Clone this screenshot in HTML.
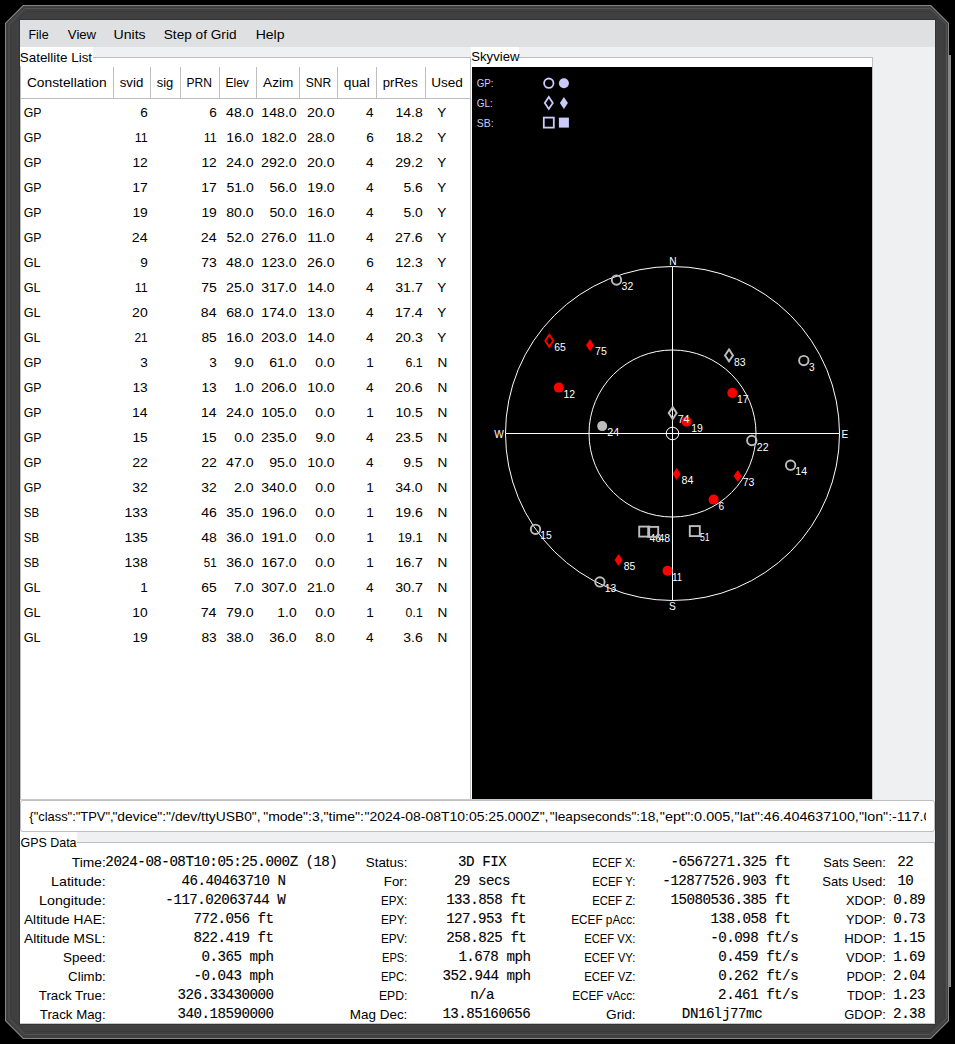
<!DOCTYPE html>
<html><head><meta charset="utf-8"><style>
html,body{margin:0;padding:0;background:#000;width:955px;height:1044px;overflow:hidden}
svg{display:block}
.ui{font-family:"Liberation Sans", sans-serif;font-size:13.6px}
.mono{font-family:"Liberation Mono", monospace;font-size:14.2px;stroke:#000;stroke-width:0.12px}
.sk{font-family:"Liberation Sans", sans-serif;font-size:10.2px}
</style></head><body>
<svg width="955" height="1044" viewBox="0 0 955 1044">
<rect x="949" y="55" width="2" height="932" fill="#888"/>
<rect x="946.5" y="55" width="2.5" height="932" fill="#3a3a3a"/>
<polygon points="23,5 931,5 949,23 949,1021 931,1039 23,1039 5,1021 5,23" fill="#868686"/>
<polygon points="23.6,6 930.4,6 948,23.6 948,1020.4 930.4,1038 23.6,1038 6,1020.4 6,23.6" fill="#404040"/>
<polygon points="25,8.5 930.5,8.5 946.5,24.5 946.5,1018.5 930.5,1034.5 25,1034.5 9,1018.5 9,24.5" fill="none" stroke="#535353" stroke-width="1"/>
<polygon points="26,11.5 929,11.5 944,26.5 944,1016.5 929,1031.5 26,1031.5 11,1016.5 11,26.5" fill="none" stroke="#3a3a3a" stroke-width="1"/>
<rect x="19.5" y="19.5" width="916" height="1005" fill="none" stroke="#333"/>
<rect x="20" y="20" width="915" height="1004" fill="#eff0f1"/>
<rect x="20" y="20" width="915" height="27" fill="#dfe0e2"/>
<text transform="matrix(0.9197 0 0 1 28.47 0)" x="0" y="38.8" class="ui" fill="#000" >File</text>
<text transform="matrix(0.9677 0 0 1 67.84 0)" x="0" y="38.8" class="ui" fill="#000" >View</text>
<text transform="matrix(1.0389 0 0 1 113.50 0)" x="0" y="38.8" class="ui" fill="#000" >Units</text>
<text transform="matrix(1.0027 0 0 1 163.77 0)" x="0" y="38.8" class="ui" fill="#000" >Step of Grid</text>
<text transform="matrix(1.0354 0 0 1 255.64 0)" x="0" y="38.8" class="ui" fill="#000" >Help</text>
<rect x="20" y="47" width="73" height="20" fill="#fff"/>
<rect x="20" y="57" width="451" height="743" fill="#fff"/>
<line x1="93" y1="57.5" x2="471" y2="57.5" stroke="#bcbec0"/>
<text transform="matrix(0.9873 0 0 1 19.78 0)" x="0" y="61.9" class="ui" fill="#000" >Satellite List</text>
<line x1="20.5" y1="66" x2="20.5" y2="800" stroke="#bcbec0"/>
<line x1="470.5" y1="57" x2="470.5" y2="800" stroke="#bcbec0"/>
<line x1="21" y1="98.5" x2="470" y2="98.5" stroke="#bcbec0"/>
<line x1="113.5" y1="67" x2="113.5" y2="98" stroke="#bcbec0"/>
<line x1="150.5" y1="67" x2="150.5" y2="98" stroke="#bcbec0"/>
<line x1="180.5" y1="67" x2="180.5" y2="98" stroke="#bcbec0"/>
<line x1="219.5" y1="67" x2="219.5" y2="98" stroke="#bcbec0"/>
<line x1="256.5" y1="67" x2="256.5" y2="98" stroke="#bcbec0"/>
<line x1="299.5" y1="67" x2="299.5" y2="98" stroke="#bcbec0"/>
<line x1="337.5" y1="67" x2="337.5" y2="98" stroke="#bcbec0"/>
<line x1="376.5" y1="67" x2="376.5" y2="98" stroke="#bcbec0"/>
<line x1="425.5" y1="67" x2="425.5" y2="98" stroke="#bcbec0"/>
<text transform="matrix(1.0153 0 0 1 26.90 0)" x="0" y="87.5" class="ui" fill="#000" >Constellation</text>
<text transform="matrix(0.9743 0 0 1 119.73 0)" x="0" y="87.5" class="ui" fill="#000" >svid</text>
<text transform="matrix(0.9519 0 0 1 156.74 0)" x="0" y="87.5" class="ui" fill="#000" >sig</text>
<text transform="matrix(0.8874 0 0 1 186.40 0)" x="0" y="87.5" class="ui" fill="#000" >PRN</text>
<text transform="matrix(0.8887 0 0 1 225.40 0)" x="0" y="87.5" class="ui" fill="#000" >Elev</text>
<text transform="matrix(1.0003 0 0 1 263.10 0)" x="0" y="87.5" class="ui" fill="#000" >Azim</text>
<text transform="matrix(0.8867 0 0 1 305.65 0)" x="0" y="87.5" class="ui" fill="#000" >SNR</text>
<text transform="matrix(1.0136 0 0 1 343.73 0)" x="0" y="87.5" class="ui" fill="#000" >qual</text>
<text transform="matrix(0.9634 0 0 1 382.76 0)" x="0" y="87.5" class="ui" fill="#000" >prRes</text>
<text transform="matrix(1.0007 0 0 1 431.14 0)" x="0" y="87.5" class="ui" fill="#000" >Used</text>
<text transform="matrix(0.9058 0 0 1 23.68 0)" x="0" y="116.6" class="ui" fill="#000" >GP</text>
<text transform="matrix(1.0000 0 0 1 140.20 0)" x="0" y="116.6" class="ui" fill="#000" >6</text>
<text transform="matrix(1.0000 0 0 1 209.20 0)" x="0" y="116.6" class="ui" fill="#000" >6</text>
<text transform="matrix(1.0413 0 0 1 226.12 0)" x="0" y="116.6" class="ui" fill="#000" >48.0</text>
<text transform="matrix(1.0379 0 0 1 261.35 0)" x="0" y="116.6" class="ui" fill="#000" >148.0</text>
<text transform="matrix(1.0419 0 0 1 307.11 0)" x="0" y="116.6" class="ui" fill="#000" >20.0</text>
<text transform="matrix(1.0000 0 0 1 366.01 0)" x="0" y="116.6" class="ui" fill="#000" >4</text>
<text transform="matrix(1.0325 0 0 1 395.42 0)" x="0" y="116.6" class="ui" fill="#000" >14.8</text>
<text transform="matrix(1.0000 0 0 1 437.29 0)" x="0" y="116.6" class="ui" fill="#000" >Y</text>
<text transform="matrix(0.9058 0 0 1 23.68 0)" x="0" y="141.6" class="ui" fill="#000" >GP</text>
<text transform="matrix(0.9247 0 0 1 134.71 0)" x="0" y="141.6" class="ui" fill="#000" >11</text>
<text transform="matrix(0.9247 0 0 1 203.71 0)" x="0" y="141.6" class="ui" fill="#000" >11</text>
<text transform="matrix(1.0324 0 0 1 226.36 0)" x="0" y="141.6" class="ui" fill="#000" >16.0</text>
<text transform="matrix(1.0379 0 0 1 261.35 0)" x="0" y="141.6" class="ui" fill="#000" >182.0</text>
<text transform="matrix(1.0419 0 0 1 307.11 0)" x="0" y="141.6" class="ui" fill="#000" >28.0</text>
<text transform="matrix(1.0000 0 0 1 366.20 0)" x="0" y="141.6" class="ui" fill="#000" >6</text>
<text transform="matrix(1.0351 0 0 1 395.41 0)" x="0" y="141.6" class="ui" fill="#000" >18.2</text>
<text transform="matrix(1.0000 0 0 1 437.29 0)" x="0" y="141.6" class="ui" fill="#000" >Y</text>
<text transform="matrix(0.9058 0 0 1 23.68 0)" x="0" y="166.6" class="ui" fill="#000" >GP</text>
<text transform="matrix(1.0174 0 0 1 132.43 0)" x="0" y="166.6" class="ui" fill="#000" >12</text>
<text transform="matrix(1.0174 0 0 1 201.43 0)" x="0" y="166.6" class="ui" fill="#000" >12</text>
<text transform="matrix(1.0419 0 0 1 226.11 0)" x="0" y="166.6" class="ui" fill="#000" >24.0</text>
<text transform="matrix(1.0451 0 0 1 261.11 0)" x="0" y="166.6" class="ui" fill="#000" >292.0</text>
<text transform="matrix(1.0419 0 0 1 307.11 0)" x="0" y="166.6" class="ui" fill="#000" >20.0</text>
<text transform="matrix(1.0000 0 0 1 366.01 0)" x="0" y="166.6" class="ui" fill="#000" >4</text>
<text transform="matrix(1.0446 0 0 1 395.17 0)" x="0" y="166.6" class="ui" fill="#000" >29.2</text>
<text transform="matrix(1.0000 0 0 1 437.29 0)" x="0" y="166.6" class="ui" fill="#000" >Y</text>
<text transform="matrix(0.9058 0 0 1 23.68 0)" x="0" y="191.6" class="ui" fill="#000" >GP</text>
<text transform="matrix(1.0220 0 0 1 132.37 0)" x="0" y="191.6" class="ui" fill="#000" >17</text>
<text transform="matrix(1.0220 0 0 1 201.37 0)" x="0" y="191.6" class="ui" fill="#000" >17</text>
<text transform="matrix(1.0294 0 0 1 226.43 0)" x="0" y="191.6" class="ui" fill="#000" >51.0</text>
<text transform="matrix(1.0294 0 0 1 269.43 0)" x="0" y="191.6" class="ui" fill="#000" >56.0</text>
<text transform="matrix(1.0324 0 0 1 307.36 0)" x="0" y="191.6" class="ui" fill="#000" >19.0</text>
<text transform="matrix(1.0000 0 0 1 366.01 0)" x="0" y="191.6" class="ui" fill="#000" >4</text>
<text transform="matrix(1.0218 0 0 1 403.44 0)" x="0" y="191.6" class="ui" fill="#000" >5.6</text>
<text transform="matrix(1.0000 0 0 1 437.29 0)" x="0" y="191.6" class="ui" fill="#000" >Y</text>
<text transform="matrix(0.9058 0 0 1 23.68 0)" x="0" y="216.6" class="ui" fill="#000" >GP</text>
<text transform="matrix(1.0174 0 0 1 132.43 0)" x="0" y="216.6" class="ui" fill="#000" >19</text>
<text transform="matrix(1.0174 0 0 1 201.43 0)" x="0" y="216.6" class="ui" fill="#000" >19</text>
<text transform="matrix(1.0368 0 0 1 226.24 0)" x="0" y="216.6" class="ui" fill="#000" >80.0</text>
<text transform="matrix(1.0294 0 0 1 269.43 0)" x="0" y="216.6" class="ui" fill="#000" >50.0</text>
<text transform="matrix(1.0324 0 0 1 307.36 0)" x="0" y="216.6" class="ui" fill="#000" >16.0</text>
<text transform="matrix(1.0000 0 0 1 366.01 0)" x="0" y="216.6" class="ui" fill="#000" >4</text>
<text transform="matrix(1.0182 0 0 1 403.44 0)" x="0" y="216.6" class="ui" fill="#000" >5.0</text>
<text transform="matrix(1.0000 0 0 1 437.29 0)" x="0" y="216.6" class="ui" fill="#000" >Y</text>
<text transform="matrix(0.9058 0 0 1 23.68 0)" x="0" y="241.6" class="ui" fill="#000" >GP</text>
<text transform="matrix(1.0478 0 0 1 131.73 0)" x="0" y="241.6" class="ui" fill="#000" >24</text>
<text transform="matrix(1.0478 0 0 1 200.73 0)" x="0" y="241.6" class="ui" fill="#000" >24</text>
<text transform="matrix(1.0294 0 0 1 226.43 0)" x="0" y="241.6" class="ui" fill="#000" >52.0</text>
<text transform="matrix(1.0451 0 0 1 261.11 0)" x="0" y="241.6" class="ui" fill="#000" >276.0</text>
<text transform="matrix(1.0759 0 0 1 307.31 0)" x="0" y="241.6" class="ui" fill="#000" >11.0</text>
<text transform="matrix(1.0000 0 0 1 366.01 0)" x="0" y="241.6" class="ui" fill="#000" >4</text>
<text transform="matrix(1.0445 0 0 1 395.11 0)" x="0" y="241.6" class="ui" fill="#000" >27.6</text>
<text transform="matrix(1.0000 0 0 1 437.29 0)" x="0" y="241.6" class="ui" fill="#000" >Y</text>
<text transform="matrix(0.9319 0 0 1 23.66 0)" x="0" y="266.6" class="ui" fill="#000" >GL</text>
<text transform="matrix(1.0000 0 0 1 140.26 0)" x="0" y="266.6" class="ui" fill="#000" >9</text>
<text transform="matrix(1.0304 0 0 1 201.18 0)" x="0" y="266.6" class="ui" fill="#000" >73</text>
<text transform="matrix(1.0413 0 0 1 226.12 0)" x="0" y="266.6" class="ui" fill="#000" >48.0</text>
<text transform="matrix(1.0379 0 0 1 261.35 0)" x="0" y="266.6" class="ui" fill="#000" >123.0</text>
<text transform="matrix(1.0419 0 0 1 307.11 0)" x="0" y="266.6" class="ui" fill="#000" >26.0</text>
<text transform="matrix(1.0000 0 0 1 366.20 0)" x="0" y="266.6" class="ui" fill="#000" >6</text>
<text transform="matrix(1.0300 0 0 1 395.48 0)" x="0" y="266.6" class="ui" fill="#000" >12.3</text>
<text transform="matrix(1.0000 0 0 1 437.29 0)" x="0" y="266.6" class="ui" fill="#000" >Y</text>
<text transform="matrix(0.9319 0 0 1 23.66 0)" x="0" y="291.6" class="ui" fill="#000" >GL</text>
<text transform="matrix(0.9247 0 0 1 134.71 0)" x="0" y="291.6" class="ui" fill="#000" >11</text>
<text transform="matrix(1.0304 0 0 1 201.18 0)" x="0" y="291.6" class="ui" fill="#000" >75</text>
<text transform="matrix(1.0419 0 0 1 226.11 0)" x="0" y="291.6" class="ui" fill="#000" >25.0</text>
<text transform="matrix(1.0411 0 0 1 261.24 0)" x="0" y="291.6" class="ui" fill="#000" >317.0</text>
<text transform="matrix(1.0324 0 0 1 307.36 0)" x="0" y="291.6" class="ui" fill="#000" >14.0</text>
<text transform="matrix(1.0000 0 0 1 366.01 0)" x="0" y="291.6" class="ui" fill="#000" >4</text>
<text transform="matrix(1.0418 0 0 1 395.24 0)" x="0" y="291.6" class="ui" fill="#000" >31.7</text>
<text transform="matrix(1.0000 0 0 1 437.29 0)" x="0" y="291.6" class="ui" fill="#000" >Y</text>
<text transform="matrix(0.9319 0 0 1 23.66 0)" x="0" y="316.6" class="ui" fill="#000" >GL</text>
<text transform="matrix(1.0303 0 0 1 132.12 0)" x="0" y="316.6" class="ui" fill="#000" >20</text>
<text transform="matrix(1.0386 0 0 1 200.87 0)" x="0" y="316.6" class="ui" fill="#000" >84</text>
<text transform="matrix(1.0394 0 0 1 226.17 0)" x="0" y="316.6" class="ui" fill="#000" >68.0</text>
<text transform="matrix(1.0379 0 0 1 261.35 0)" x="0" y="316.6" class="ui" fill="#000" >174.0</text>
<text transform="matrix(1.0324 0 0 1 307.36 0)" x="0" y="316.6" class="ui" fill="#000" >13.0</text>
<text transform="matrix(1.0000 0 0 1 366.01 0)" x="0" y="316.6" class="ui" fill="#000" >4</text>
<text transform="matrix(1.0422 0 0 1 394.97 0)" x="0" y="316.6" class="ui" fill="#000" >17.4</text>
<text transform="matrix(1.0000 0 0 1 437.29 0)" x="0" y="316.6" class="ui" fill="#000" >Y</text>
<text transform="matrix(0.9319 0 0 1 23.66 0)" x="0" y="341.6" class="ui" fill="#000" >GL</text>
<text transform="matrix(0.8769 0 0 1 134.47 0)" x="0" y="341.6" class="ui" fill="#000" >21</text>
<text transform="matrix(1.0168 0 0 1 201.38 0)" x="0" y="341.6" class="ui" fill="#000" >85</text>
<text transform="matrix(1.0324 0 0 1 226.36 0)" x="0" y="341.6" class="ui" fill="#000" >16.0</text>
<text transform="matrix(1.0451 0 0 1 261.11 0)" x="0" y="341.6" class="ui" fill="#000" >203.0</text>
<text transform="matrix(1.0324 0 0 1 307.36 0)" x="0" y="341.6" class="ui" fill="#000" >14.0</text>
<text transform="matrix(1.0000 0 0 1 366.01 0)" x="0" y="341.6" class="ui" fill="#000" >4</text>
<text transform="matrix(1.0395 0 0 1 395.24 0)" x="0" y="341.6" class="ui" fill="#000" >20.3</text>
<text transform="matrix(1.0000 0 0 1 437.29 0)" x="0" y="341.6" class="ui" fill="#000" >Y</text>
<text transform="matrix(0.9058 0 0 1 23.68 0)" x="0" y="366.6" class="ui" fill="#000" >GP</text>
<text transform="matrix(1.0000 0 0 1 140.20 0)" x="0" y="366.6" class="ui" fill="#000" >3</text>
<text transform="matrix(1.0000 0 0 1 209.20 0)" x="0" y="366.6" class="ui" fill="#000" >3</text>
<text transform="matrix(1.0323 0 0 1 234.18 0)" x="0" y="366.6" class="ui" fill="#000" >9.0</text>
<text transform="matrix(1.0394 0 0 1 269.17 0)" x="0" y="366.6" class="ui" fill="#000" >61.0</text>
<text transform="matrix(1.0251 0 0 1 315.31 0)" x="0" y="366.6" class="ui" fill="#000" >0.0</text>
<text transform="matrix(1.0000 0 0 1 366.26 0)" x="0" y="366.6" class="ui" fill="#000" >1</text>
<text transform="matrix(0.9120 0 0 1 405.51 0)" x="0" y="366.6" class="ui" fill="#000" >6.1</text>
<text transform="matrix(1.0000 0 0 1 437.38 0)" x="0" y="366.6" class="ui" fill="#000" >N</text>
<text transform="matrix(0.9058 0 0 1 23.68 0)" x="0" y="391.6" class="ui" fill="#000" >GP</text>
<text transform="matrix(1.0081 0 0 1 132.50 0)" x="0" y="391.6" class="ui" fill="#000" >13</text>
<text transform="matrix(1.0081 0 0 1 201.50 0)" x="0" y="391.6" class="ui" fill="#000" >13</text>
<text transform="matrix(1.0222 0 0 1 234.37 0)" x="0" y="391.6" class="ui" fill="#000" >1.0</text>
<text transform="matrix(1.0451 0 0 1 261.11 0)" x="0" y="391.6" class="ui" fill="#000" >206.0</text>
<text transform="matrix(1.0324 0 0 1 307.36 0)" x="0" y="391.6" class="ui" fill="#000" >10.0</text>
<text transform="matrix(1.0000 0 0 1 366.01 0)" x="0" y="391.6" class="ui" fill="#000" >4</text>
<text transform="matrix(1.0445 0 0 1 395.11 0)" x="0" y="391.6" class="ui" fill="#000" >20.6</text>
<text transform="matrix(1.0000 0 0 1 437.38 0)" x="0" y="391.6" class="ui" fill="#000" >N</text>
<text transform="matrix(0.9058 0 0 1 23.68 0)" x="0" y="416.6" class="ui" fill="#000" >GP</text>
<text transform="matrix(1.0307 0 0 1 131.98 0)" x="0" y="416.6" class="ui" fill="#000" >14</text>
<text transform="matrix(1.0307 0 0 1 200.98 0)" x="0" y="416.6" class="ui" fill="#000" >14</text>
<text transform="matrix(1.0419 0 0 1 226.11 0)" x="0" y="416.6" class="ui" fill="#000" >24.0</text>
<text transform="matrix(1.0379 0 0 1 261.35 0)" x="0" y="416.6" class="ui" fill="#000" >105.0</text>
<text transform="matrix(1.0251 0 0 1 315.31 0)" x="0" y="416.6" class="ui" fill="#000" >0.0</text>
<text transform="matrix(1.0000 0 0 1 366.26 0)" x="0" y="416.6" class="ui" fill="#000" >1</text>
<text transform="matrix(1.0300 0 0 1 395.48 0)" x="0" y="416.6" class="ui" fill="#000" >10.5</text>
<text transform="matrix(1.0000 0 0 1 437.38 0)" x="0" y="416.6" class="ui" fill="#000" >N</text>
<text transform="matrix(0.9058 0 0 1 23.68 0)" x="0" y="441.6" class="ui" fill="#000" >GP</text>
<text transform="matrix(1.0081 0 0 1 132.50 0)" x="0" y="441.6" class="ui" fill="#000" >15</text>
<text transform="matrix(1.0081 0 0 1 201.50 0)" x="0" y="441.6" class="ui" fill="#000" >15</text>
<text transform="matrix(1.0251 0 0 1 234.31 0)" x="0" y="441.6" class="ui" fill="#000" >0.0</text>
<text transform="matrix(1.0451 0 0 1 261.11 0)" x="0" y="441.6" class="ui" fill="#000" >235.0</text>
<text transform="matrix(1.0323 0 0 1 315.18 0)" x="0" y="441.6" class="ui" fill="#000" >9.0</text>
<text transform="matrix(1.0000 0 0 1 366.01 0)" x="0" y="441.6" class="ui" fill="#000" >4</text>
<text transform="matrix(1.0395 0 0 1 395.24 0)" x="0" y="441.6" class="ui" fill="#000" >23.5</text>
<text transform="matrix(1.0000 0 0 1 437.38 0)" x="0" y="441.6" class="ui" fill="#000" >N</text>
<text transform="matrix(0.9058 0 0 1 23.68 0)" x="0" y="466.6" class="ui" fill="#000" >GP</text>
<text transform="matrix(1.0351 0 0 1 132.18 0)" x="0" y="466.6" class="ui" fill="#000" >22</text>
<text transform="matrix(1.0351 0 0 1 201.18 0)" x="0" y="466.6" class="ui" fill="#000" >22</text>
<text transform="matrix(1.0413 0 0 1 226.12 0)" x="0" y="466.6" class="ui" fill="#000" >47.0</text>
<text transform="matrix(1.0393 0 0 1 269.18 0)" x="0" y="466.6" class="ui" fill="#000" >95.0</text>
<text transform="matrix(1.0324 0 0 1 307.36 0)" x="0" y="466.6" class="ui" fill="#000" >10.0</text>
<text transform="matrix(1.0000 0 0 1 366.01 0)" x="0" y="466.6" class="ui" fill="#000" >4</text>
<text transform="matrix(1.0289 0 0 1 403.31 0)" x="0" y="466.6" class="ui" fill="#000" >9.5</text>
<text transform="matrix(1.0000 0 0 1 437.38 0)" x="0" y="466.6" class="ui" fill="#000" >N</text>
<text transform="matrix(0.9058 0 0 1 23.68 0)" x="0" y="491.6" class="ui" fill="#000" >GP</text>
<text transform="matrix(1.0257 0 0 1 132.31 0)" x="0" y="491.6" class="ui" fill="#000" >32</text>
<text transform="matrix(1.0257 0 0 1 201.31 0)" x="0" y="491.6" class="ui" fill="#000" >32</text>
<text transform="matrix(1.0360 0 0 1 234.11 0)" x="0" y="491.6" class="ui" fill="#000" >2.0</text>
<text transform="matrix(1.0411 0 0 1 261.24 0)" x="0" y="491.6" class="ui" fill="#000" >340.0</text>
<text transform="matrix(1.0251 0 0 1 315.31 0)" x="0" y="491.6" class="ui" fill="#000" >0.0</text>
<text transform="matrix(1.0000 0 0 1 366.26 0)" x="0" y="491.6" class="ui" fill="#000" >1</text>
<text transform="matrix(1.0367 0 0 1 395.24 0)" x="0" y="491.6" class="ui" fill="#000" >34.0</text>
<text transform="matrix(1.0000 0 0 1 437.38 0)" x="0" y="491.6" class="ui" fill="#000" >N</text>
<text transform="matrix(0.8463 0 0 1 23.77 0)" x="0" y="516.6" class="ui" fill="#000" >SB</text>
<text transform="matrix(1.0252 0 0 1 124.49 0)" x="0" y="516.6" class="ui" fill="#000" >133</text>
<text transform="matrix(1.0340 0 0 1 201.13 0)" x="0" y="516.6" class="ui" fill="#000" >46</text>
<text transform="matrix(1.0367 0 0 1 226.24 0)" x="0" y="516.6" class="ui" fill="#000" >35.0</text>
<text transform="matrix(1.0379 0 0 1 261.35 0)" x="0" y="516.6" class="ui" fill="#000" >196.0</text>
<text transform="matrix(1.0251 0 0 1 315.31 0)" x="0" y="516.6" class="ui" fill="#000" >0.0</text>
<text transform="matrix(1.0000 0 0 1 366.26 0)" x="0" y="516.6" class="ui" fill="#000" >1</text>
<text transform="matrix(1.0350 0 0 1 395.35 0)" x="0" y="516.6" class="ui" fill="#000" >19.6</text>
<text transform="matrix(1.0000 0 0 1 437.38 0)" x="0" y="516.6" class="ui" fill="#000" >N</text>
<text transform="matrix(0.8463 0 0 1 23.77 0)" x="0" y="541.6" class="ui" fill="#000" >SB</text>
<text transform="matrix(1.0252 0 0 1 124.49 0)" x="0" y="541.6" class="ui" fill="#000" >135</text>
<text transform="matrix(1.0296 0 0 1 201.19 0)" x="0" y="541.6" class="ui" fill="#000" >48</text>
<text transform="matrix(1.0367 0 0 1 226.24 0)" x="0" y="541.6" class="ui" fill="#000" >36.0</text>
<text transform="matrix(1.0379 0 0 1 261.35 0)" x="0" y="541.6" class="ui" fill="#000" >191.0</text>
<text transform="matrix(1.0251 0 0 1 315.31 0)" x="0" y="541.6" class="ui" fill="#000" >0.0</text>
<text transform="matrix(1.0000 0 0 1 366.26 0)" x="0" y="541.6" class="ui" fill="#000" >1</text>
<text transform="matrix(0.9472 0 0 1 397.69 0)" x="0" y="541.6" class="ui" fill="#000" >19.1</text>
<text transform="matrix(1.0000 0 0 1 437.38 0)" x="0" y="541.6" class="ui" fill="#000" >N</text>
<text transform="matrix(0.8463 0 0 1 23.77 0)" x="0" y="566.6" class="ui" fill="#000" >SB</text>
<text transform="matrix(1.0282 0 0 1 124.42 0)" x="0" y="566.6" class="ui" fill="#000" >138</text>
<text transform="matrix(0.8556 0 0 1 203.78 0)" x="0" y="566.6" class="ui" fill="#000" >51</text>
<text transform="matrix(1.0367 0 0 1 226.24 0)" x="0" y="566.6" class="ui" fill="#000" >36.0</text>
<text transform="matrix(1.0379 0 0 1 261.35 0)" x="0" y="566.6" class="ui" fill="#000" >167.0</text>
<text transform="matrix(1.0251 0 0 1 315.31 0)" x="0" y="566.6" class="ui" fill="#000" >0.0</text>
<text transform="matrix(1.0000 0 0 1 366.26 0)" x="0" y="566.6" class="ui" fill="#000" >1</text>
<text transform="matrix(1.0376 0 0 1 395.35 0)" x="0" y="566.6" class="ui" fill="#000" >16.7</text>
<text transform="matrix(1.0000 0 0 1 437.38 0)" x="0" y="566.6" class="ui" fill="#000" >N</text>
<text transform="matrix(0.9319 0 0 1 23.66 0)" x="0" y="591.6" class="ui" fill="#000" >GL</text>
<text transform="matrix(1.0000 0 0 1 140.26 0)" x="0" y="591.6" class="ui" fill="#000" >1</text>
<text transform="matrix(1.0214 0 0 1 201.31 0)" x="0" y="591.6" class="ui" fill="#000" >65</text>
<text transform="matrix(1.0395 0 0 1 234.05 0)" x="0" y="591.6" class="ui" fill="#000" >7.0</text>
<text transform="matrix(1.0411 0 0 1 261.24 0)" x="0" y="591.6" class="ui" fill="#000" >307.0</text>
<text transform="matrix(1.0419 0 0 1 307.11 0)" x="0" y="591.6" class="ui" fill="#000" >21.0</text>
<text transform="matrix(1.0000 0 0 1 366.01 0)" x="0" y="591.6" class="ui" fill="#000" >4</text>
<text transform="matrix(1.0418 0 0 1 395.24 0)" x="0" y="591.6" class="ui" fill="#000" >30.7</text>
<text transform="matrix(1.0000 0 0 1 437.38 0)" x="0" y="591.6" class="ui" fill="#000" >N</text>
<text transform="matrix(0.9319 0 0 1 23.66 0)" x="0" y="616.6" class="ui" fill="#000" >GL</text>
<text transform="matrix(1.0127 0 0 1 132.37 0)" x="0" y="616.6" class="ui" fill="#000" >10</text>
<text transform="matrix(1.0522 0 0 1 200.66 0)" x="0" y="616.6" class="ui" fill="#000" >74</text>
<text transform="matrix(1.0444 0 0 1 226.04 0)" x="0" y="616.6" class="ui" fill="#000" >79.0</text>
<text transform="matrix(1.0222 0 0 1 277.37 0)" x="0" y="616.6" class="ui" fill="#000" >1.0</text>
<text transform="matrix(1.0251 0 0 1 315.31 0)" x="0" y="616.6" class="ui" fill="#000" >0.0</text>
<text transform="matrix(1.0000 0 0 1 366.26 0)" x="0" y="616.6" class="ui" fill="#000" >1</text>
<text transform="matrix(0.9059 0 0 1 405.62 0)" x="0" y="616.6" class="ui" fill="#000" >0.1</text>
<text transform="matrix(1.0000 0 0 1 437.38 0)" x="0" y="616.6" class="ui" fill="#000" >N</text>
<text transform="matrix(0.9319 0 0 1 23.66 0)" x="0" y="641.6" class="ui" fill="#000" >GL</text>
<text transform="matrix(1.0174 0 0 1 132.43 0)" x="0" y="641.6" class="ui" fill="#000" >19</text>
<text transform="matrix(1.0168 0 0 1 201.38 0)" x="0" y="641.6" class="ui" fill="#000" >83</text>
<text transform="matrix(1.0367 0 0 1 226.24 0)" x="0" y="641.6" class="ui" fill="#000" >38.0</text>
<text transform="matrix(1.0367 0 0 1 269.24 0)" x="0" y="641.6" class="ui" fill="#000" >36.0</text>
<text transform="matrix(1.0287 0 0 1 315.25 0)" x="0" y="641.6" class="ui" fill="#000" >8.0</text>
<text transform="matrix(1.0000 0 0 1 366.01 0)" x="0" y="641.6" class="ui" fill="#000" >4</text>
<text transform="matrix(1.0322 0 0 1 403.25 0)" x="0" y="641.6" class="ui" fill="#000" >3.6</text>
<text transform="matrix(1.0000 0 0 1 437.38 0)" x="0" y="641.6" class="ui" fill="#000" >N</text>
<rect x="471" y="47" width="48" height="20" fill="#fff"/>
<rect x="471" y="57" width="402" height="743" fill="#fff"/>
<line x1="519" y1="57.5" x2="872" y2="57.5" stroke="#bcbec0"/>
<line x1="872.5" y1="57" x2="872.5" y2="800" stroke="#bcbec0"/>
<text transform="matrix(0.9645 0 0 1 471.30 0)" x="0" y="61.4" class="ui" fill="#000" >Skyview</text>
<rect x="472" y="67" width="400" height="732" fill="#000"/>
<text transform="matrix(0.9594 0 0 1 476.72 0)" x="0" y="87.2" class="sk" fill="#cacafc" >GP:</text>
<circle cx="548.8" cy="83.2" r="4.7" fill="none" stroke="#cacafc" stroke-width="1.8"/>
<circle cx="563.9" cy="83.2" r="5" fill="#cacafc"/>
<text transform="matrix(0.9782 0 0 1 476.71 0)" x="0" y="106.9" class="sk" fill="#cacafc" >GL:</text>
<polygon points="548.8,96.9 552.8,102.9 548.8,108.9 544.8,102.9" fill="none" stroke="#cacafc" stroke-width="1.8"/>
<polygon points="563.9,96.9 567.9,102.9 563.9,108.9 559.9,102.9" fill="#cacafc"/>
<text transform="matrix(1.0272 0 0 1 476.75 0)" x="0" y="126.6" class="sk" fill="#cacafc" >SB:</text>
<rect x="543.8" y="117.6" width="10" height="10" fill="none" stroke="#cacafc" stroke-width="1.8"/>
<rect x="558.9" y="117.6" width="10" height="10" fill="#cacafc"/>
<circle cx="672.5" cy="433.5" r="167" fill="none" stroke="#fff" stroke-width="1"/>
<circle cx="672.5" cy="433.5" r="83.5" fill="none" stroke="#fff" stroke-width="1"/>
<circle cx="672.5" cy="433.5" r="6.3" fill="none" stroke="#fff" stroke-width="1"/>
<line x1="505.5" y1="433.5" x2="839.5" y2="433.5" stroke="#fff" stroke-width="1"/>
<line x1="672.5" y1="266.5" x2="672.5" y2="600.5" stroke="#fff" stroke-width="1"/>
<text transform="matrix(1.0000 0 0 1 669.31 0)" x="0" y="265" class="sk" fill="#fff" >N</text>
<text transform="matrix(1.0000 0 0 1 669.12 0)" x="0" y="609.5" class="sk" fill="#fff" >S</text>
<text transform="matrix(1.0000 0 0 1 494.19 0)" x="0" y="437.5" class="sk" fill="#fff" >W</text>
<text transform="matrix(1.0000 0 0 1 841.41 0)" x="0" y="437.5" class="sk" fill="#fff" >E</text>
<circle cx="713.6" cy="499.6" r="5" fill="#ff0000"/>
<text transform="matrix(1.0000 0 0 1 718.60 0)" x="0" y="510" class="sk" fill="#fff" >6</text>
<circle cx="667.5" cy="570.7" r="5" fill="#ff0000"/>
<text transform="matrix(0.9294 0 0 1 672.31 0)" x="0" y="581" class="sk" fill="#fff" >11</text>
<circle cx="558.8" cy="387.6" r="5" fill="#ff0000"/>
<text transform="matrix(1.0207 0 0 1 563.49 0)" x="0" y="398" class="sk" fill="#fff" >12</text>
<circle cx="732.3" cy="393.0" r="5" fill="#ff0000"/>
<text transform="matrix(1.0269 0 0 1 737.02 0)" x="0" y="403" class="sk" fill="#fff" >17</text>
<circle cx="686.5" cy="421.6" r="5" fill="#ff0000"/>
<text transform="matrix(1.0207 0 0 1 691.25 0)" x="0" y="432" class="sk" fill="#fff" >19</text>
<circle cx="602.2" cy="426.1" r="5" fill="#bdbdbd"/>
<text transform="matrix(1.0554 0 0 1 607.15 0)" x="0" y="436" class="sk" fill="#fff" >24</text>
<polygon points="737.7,469.9 741.7,475.9 737.7,481.9 733.7,475.9" fill="#ff0000"/>
<text transform="matrix(1.0321 0 0 1 742.64 0)" x="0" y="486" class="sk" fill="#fff" >73</text>
<polygon points="590.0,339.3 594.0,345.3 590.0,351.3 586.0,345.3" fill="#ff0000"/>
<text transform="matrix(1.0321 0 0 1 595.03 0)" x="0" y="355" class="sk" fill="#fff" >75</text>
<polygon points="676.6,468.1 680.6,474.1 676.6,480.1 672.6,474.1" fill="#ff0000"/>
<text transform="matrix(1.0433 0 0 1 681.61 0)" x="0" y="484" class="sk" fill="#fff" >84</text>
<polygon points="618.6,553.9 622.6,559.9 618.6,565.9 614.6,559.9" fill="#ff0000"/>
<text transform="matrix(1.0199 0 0 1 623.70 0)" x="0" y="570" class="sk" fill="#fff" >85</text>
<circle cx="803.8" cy="360.6" r="4.7" fill="none" stroke="#bdbdbd" stroke-width="1.9"/>
<text transform="matrix(1.0000 0 0 1 808.88 0)" x="0" y="371" class="sk" fill="#fff" >3</text>
<circle cx="599.9" cy="581.9" r="4.7" fill="none" stroke="#bdbdbd" stroke-width="1.9"/>
<text transform="matrix(1.0144 0 0 1 604.64 0)" x="0" y="592" class="sk" fill="#fff" >13</text>
<circle cx="790.6" cy="465.2" r="4.7" fill="none" stroke="#bdbdbd" stroke-width="1.9"/>
<text transform="matrix(1.0385 0 0 1 795.31 0)" x="0" y="475" class="sk" fill="#fff" >14</text>
<circle cx="535.5" cy="529.3" r="4.7" fill="none" stroke="#bdbdbd" stroke-width="1.9"/>
<text transform="matrix(1.0144 0 0 1 540.24 0)" x="0" y="539" class="sk" fill="#fff" >15</text>
<circle cx="751.8" cy="440.5" r="4.7" fill="none" stroke="#bdbdbd" stroke-width="1.9"/>
<text transform="matrix(1.0383 0 0 1 756.77 0)" x="0" y="451" class="sk" fill="#fff" >22</text>
<circle cx="616.5" cy="280.1" r="4.7" fill="none" stroke="#bdbdbd" stroke-width="1.9"/>
<text transform="matrix(1.0259 0 0 1 621.57 0)" x="0" y="290" class="sk" fill="#fff" >32</text>
<rect x="639.2" y="526.6" width="10" height="10" fill="none" stroke="#bdbdbd" stroke-width="1.9"/>
<text transform="matrix(1.0311 0 0 1 649.48 0)" x="0" y="542" class="sk" fill="#fff" >46</text>
<rect x="648.2" y="526.9" width="10" height="10" fill="none" stroke="#bdbdbd" stroke-width="1.9"/>
<text transform="matrix(1.0311 0 0 1 658.49 0)" x="0" y="542" class="sk" fill="#fff" >48</text>
<rect x="689.8" y="526.1" width="10" height="10" fill="none" stroke="#bdbdbd" stroke-width="1.9"/>
<text transform="matrix(0.8529 0 0 1 700.02 0)" x="0" y="541" class="sk" fill="#fff" >51</text>
<polygon points="549.3,334.8 553.3,340.8 549.3,346.8 545.3,340.8" fill="none" stroke="#ff0000" stroke-width="1.9"/>
<text transform="matrix(1.0201 0 0 1 554.29 0)" x="0" y="351" class="sk" fill="#fff" >65</text>
<polygon points="672.7,407.1 676.7,413.1 672.7,419.1 668.7,413.1" fill="none" stroke="#bdbdbd" stroke-width="1.9"/>
<text transform="matrix(1.0554 0 0 1 677.63 0)" x="0" y="423" class="sk" fill="#fff" >74</text>
<polygon points="729.0,349.4 733.0,355.4 729.0,361.4 725.0,355.4" fill="none" stroke="#bdbdbd" stroke-width="1.9"/>
<text transform="matrix(1.0199 0 0 1 734.07 0)" x="0" y="366" class="sk" fill="#fff" >83</text>
<rect x="20.5" y="800.5" width="914" height="31" rx="2.5" fill="#fff" stroke="#bcbec0"/>
<line x1="20" y1="799.5" x2="873" y2="799.5" stroke="#c8c9cb"/>
<clipPath id="ec"><rect x="21" y="801" width="905" height="30"/></clipPath>
<g clip-path="url(#ec)">
<text transform="matrix(0.9496 0 0 1 29.32 0)" x="0" y="820.6" class="ui" fill="#000" >{&quot;class&quot;:&quot;TPV&quot;,</text>
<text transform="matrix(1.0185 0 0 1 112.43 0)" x="0" y="820.6" class="ui" fill="#000" >&quot;device&quot;:&quot;/dev/ttyUSB0&quot;,</text>
<text transform="matrix(1.0275 0 0 1 263.22 0)" x="0" y="820.6" class="ui" fill="#000" >&quot;mode&quot;:3,</text>
<text transform="matrix(1.0357 0 0 1 323.52 0)" x="0" y="820.6" class="ui" fill="#000" >&quot;time&quot;:</text>
<text transform="matrix(1.0289 0 0 1 364.52 0)" x="0" y="820.6" class="ui" fill="#000" >&quot;2024-08-08T10:05:25.000Z&quot;,</text>
<text transform="matrix(1.0053 0 0 1 549.83 0)" x="0" y="820.6" class="ui" fill="#000" >&quot;leapseconds&quot;:18,</text>
<text transform="matrix(1.0613 0 0 1 659.80 0)" x="0" y="820.6" class="ui" fill="#000" >&quot;ept&quot;:0.005,</text>
<text transform="matrix(1.0488 0 0 1 734.61 0)" x="0" y="820.6" class="ui" fill="#000" >&quot;lat&quot;:46.404637100,</text>
<text transform="matrix(1.0486 0 0 1 859.01 0)" x="0" y="820.6" class="ui" fill="#000" >&quot;lon&quot;:-117.020637440,&quot;alt</text>
</g>
<rect x="20" y="832" width="57" height="20" fill="#fff"/>
<rect x="20" y="842" width="915" height="182" fill="#fff"/>
<polyline points="20,1023.5 934.5,1023.5 934.5,842" fill="none" stroke="#c6c7c8"/>
<line x1="77" y1="842.5" x2="935" y2="842.5" stroke="#bcbec0"/>
<text transform="matrix(0.9163 0 0 1 20.47 0)" x="0" y="847" class="ui" fill="#000" >GPS Data</text>
<text transform="matrix(1.0150 0 0 1 71.78 0)" x="0" y="867" class="ui" fill="#000" >Time:</text>
<text x="105.29 113.38 121.29 129.35 137.35 145.38 153.35 161.35 169.38 177.35 185.38 193.51 201.38 209.35 217.38 225.29 233.35 241.29 249.29 257.35 265.38 273.38 281.38 289.66 305.57 313.51 321.35 329.13" y="866" class="mono" fill="#000">2024-08-08T10:05:25.000Z(18)</text>
<text transform="matrix(0.9846 0 0 1 365.75 0)" x="0" y="867" class="ui" fill="#000" >Status:</text>
<text x="458.09 465.96 482.34 490.15 498.15" y="866" class="mono" fill="#000">3DFIX</text>
<text transform="matrix(0.8169 0 0 1 592.21 0)" x="0" y="867" class="ui" fill="#000" >ECEF X:</text>
<text x="670.45 678.42 686.39 694.42 702.39 710.39 718.39 726.61 734.45 742.39 750.39 758.39 774.51 782.29" y="866" class="mono" fill="#000">-6567271.325ft</text>
<text transform="matrix(0.9403 0 0 1 823.27 0)" x="0" y="867" class="ui" fill="#000" >Sats Seen:</text>
<text x="897.19 905.19" y="866" class="mono" fill="#000">22</text>
<text transform="matrix(1.0492 0 0 1 51.04 0)" x="0" y="886" class="ui" fill="#000" >Latitude:</text>
<text x="181.45 189.42 197.45 205.45 213.48 221.45 229.42 237.39 245.39 253.61 261.48 277.45" y="885" class="mono" fill="#000">46.40463710N</text>
<text transform="matrix(0.9772 0 0 1 383.83 0)" x="0" y="886" class="ui" fill="#000" >For:</text>
<text x="453.89 461.92 477.98 485.98 494.11 501.98" y="885" class="mono" fill="#000">29secs</text>
<text transform="matrix(0.8333 0 0 1 592.19 0)" x="0" y="886" class="ui" fill="#000" >ECEF Y:</text>
<text x="662.35 670.51 678.29 686.35 694.29 702.29 710.29 718.29 726.32 734.35 742.32 750.38 758.29 774.41 782.19" y="885" class="mono" fill="#000">-12877526.903ft</text>
<text transform="matrix(0.9559 0 0 1 822.27 0)" x="0" y="886" class="ui" fill="#000" >Sats Used:</text>
<text x="897.41 905.28" y="885" class="mono" fill="#000">10</text>
<text transform="matrix(1.0503 0 0 1 39.04 0)" x="0" y="905" class="ui" fill="#000" >Longitude:</text>
<text x="165.25 173.41 181.41 189.19 197.25 205.28 213.19 221.28 229.22 237.19 245.19 253.25 261.25 277.25" y="904" class="mono" fill="#000">-117.02063744W</text>
<text transform="matrix(0.8493 0 0 1 380.97 0)" x="0" y="905" class="ui" fill="#000" >EPX:</text>
<text x="446.31 454.09 462.09 470.15 478.15 486.09 494.15 510.21 517.99" y="904" class="mono" fill="#000">133.858ft</text>
<text transform="matrix(0.8294 0 0 1 592.19 0)" x="0" y="905" class="ui" fill="#000" >ECEF Z:</text>
<text x="670.61 678.39 686.48 694.45 702.48 710.39 718.39 726.42 734.45 742.39 750.45 758.39 774.51 782.29" y="904" class="mono" fill="#000">15080536.385ft</text>
<text transform="matrix(0.9437 0 0 1 845.94 0)" x="0" y="905" class="ui" fill="#000" >XDOP:</text>
<text x="893.18 901.15 909.15 917.12" y="904" class="mono" fill="#000">0.89</text>
<text transform="matrix(1.0102 0 0 1 23.97 0)" x="0" y="924" class="ui" fill="#000" >Altitude HAE:</text>
<text x="193.49 201.49 209.49 217.55 225.58 233.49 241.52 257.61 265.39" y="923" class="mono" fill="#000">772.056ft</text>
<text transform="matrix(0.8721 0 0 1 380.94 0)" x="0" y="924" class="ui" fill="#000" >EPY:</text>
<text x="446.31 454.09 462.09 470.15 478.12 486.09 494.09 510.21 517.99" y="923" class="mono" fill="#000">127.953ft</text>
<text transform="matrix(0.8681 0 0 1 571.15 0)" x="0" y="924" class="ui" fill="#000" >ECEF pAcc:</text>
<text x="710.61 718.39 726.45 734.45 742.48 750.39 758.45 774.51 782.29" y="923" class="mono" fill="#000">138.058ft</text>
<text transform="matrix(0.9452 0 0 1 845.88 0)" x="0" y="924" class="ui" fill="#000" >YDOP:</text>
<text x="893.18 901.15 909.09 917.09" y="923" class="mono" fill="#000">0.73</text>
<text transform="matrix(1.0103 0 0 1 23.97 0)" x="0" y="943" class="ui" fill="#000" >Altitude MSL:</text>
<text x="193.55 201.49 209.49 217.55 225.55 233.71 241.52 257.61 265.39" y="942" class="mono" fill="#000">822.419ft</text>
<text transform="matrix(0.8645 0 0 1 380.95 0)" x="0" y="943" class="ui" fill="#000" >EPV:</text>
<text x="446.29 454.29 462.35 470.35 478.35 486.29 494.29 510.41 518.19" y="942" class="mono" fill="#000">258.825ft</text>
<text transform="matrix(0.8265 0 0 1 584.20 0)" x="0" y="943" class="ui" fill="#000" >ECEF VX:</text>
<text x="710.15 718.18 726.15 734.18 742.12 750.15 766.21 773.99 781.99 790.18" y="942" class="mono" fill="#000">-0.098ft/s</text>
<text transform="matrix(0.9650 0 0 1 844.34 0)" x="0" y="943" class="ui" fill="#000" >HDOP:</text>
<text x="893.31 901.15 909.31 917.09" y="942" class="mono" fill="#000">1.15</text>
<text transform="matrix(0.9904 0 0 1 63.04 0)" x="0" y="962" class="ui" fill="#000" >Speed:</text>
<text x="201.58 209.55 217.49 225.52 233.49 249.58 257.61 265.58" y="961" class="mono" fill="#000">0.365mph</text>
<text transform="matrix(0.8144 0 0 1 382.01 0)" x="0" y="962" class="ui" fill="#000" >EPS:</text>
<text x="458.51 466.35 474.32 482.29 490.35 506.38 514.41 522.38" y="961" class="mono" fill="#000">1.678mph</text>
<text transform="matrix(0.8371 0 0 1 584.18 0)" x="0" y="962" class="ui" fill="#000" >ECEF VY:</text>
<text x="718.18 726.15 734.15 742.09 750.12 766.21 773.99 781.99 790.18" y="961" class="mono" fill="#000">0.459ft/s</text>
<text transform="matrix(0.9395 0 0 1 846.12 0)" x="0" y="962" class="ui" fill="#000" >VDOP:</text>
<text x="893.31 901.15 909.12 917.12" y="961" class="mono" fill="#000">1.69</text>
<text transform="matrix(0.9759 0 0 1 68.12 0)" x="0" y="981" class="ui" fill="#000" >Climb:</text>
<text x="193.45 201.48 209.45 217.48 225.45 233.39 249.48 257.51 265.48" y="980" class="mono" fill="#000">-0.043mph</text>
<text transform="matrix(0.8276 0 0 1 380.99 0)" x="0" y="981" class="ui" fill="#000" >EPC:</text>
<text x="442.39 450.39 458.39 466.45 474.42 482.45 490.45 506.48 514.51 522.48" y="980" class="mono" fill="#000">352.944mph</text>
<text transform="matrix(0.8373 0 0 1 584.18 0)" x="0" y="981" class="ui" fill="#000" >ECEF VZ:</text>
<text x="718.18 726.15 734.09 742.12 750.09 766.21 773.99 781.99 790.18" y="980" class="mono" fill="#000">0.262ft/s</text>
<text transform="matrix(0.9332 0 0 1 846.38 0)" x="0" y="981" class="ui" fill="#000" >PDOP:</text>
<text x="893.09 901.15 909.18 917.15" y="980" class="mono" fill="#000">2.04</text>
<text transform="matrix(0.9798 0 0 1 38.79 0)" x="0" y="1000" class="ui" fill="#000" >Track True:</text>
<text x="177.39 185.39 193.42 201.45 209.39 217.39 225.45 233.39 241.48 249.48 257.48 265.48" y="999" class="mono" fill="#000">326.33430000</text>
<text transform="matrix(0.8955 0 0 1 378.92 0)" x="0" y="1000" class="ui" fill="#000" >EPD:</text>
<text x="470.28 478.09 485.91" y="999" class="mono" fill="#000">n/a</text>
<text transform="matrix(0.8634 0 0 1 572.15 0)" x="0" y="1000" class="ui" fill="#000" >ECEF vAcc:</text>
<text x="718.09 726.15 734.15 742.12 750.31 766.21 773.99 781.99 790.18" y="999" class="mono" fill="#000">2.461ft/s</text>
<text transform="matrix(0.9352 0 0 1 847.01 0)" x="0" y="1000" class="ui" fill="#000" >TDOP:</text>
<text x="893.31 901.15 909.09 917.09" y="999" class="mono" fill="#000">1.23</text>
<text transform="matrix(0.9759 0 0 1 39.80 0)" x="0" y="1019" class="ui" fill="#000" >Track Mag:</text>
<text x="177.39 185.45 193.48 201.45 209.61 217.45 225.39 233.42 241.48 249.48 257.48 265.48" y="1018" class="mono" fill="#000">340.18590000</text>
<text transform="matrix(0.9896 0 0 1 349.81 0)" x="0" y="1019" class="ui" fill="#000" >Mag Dec:</text>
<text x="442.51 450.29 458.35 466.35 474.29 482.51 490.32 498.38 506.32 514.29 522.32" y="1018" class="mono" fill="#000">13.85160656</text>
<text transform="matrix(1.0072 0 0 1 606.00 0)" x="0" y="1019" class="ui" fill="#000" >Grid:</text>
<text x="681.86 690.05 698.21 706.02 713.39 722.14 729.99 737.99 746.08 754.21" y="1018" class="mono" fill="#000">DN16lj77mc</text>
<text transform="matrix(0.9480 0 0 1 844.34 0)" x="0" y="1019" class="ui" fill="#000" >GDOP:</text>
<text x="893.09 901.15 909.09 917.15" y="1018" class="mono" fill="#000">2.38</text>
</svg>
</body></html>
